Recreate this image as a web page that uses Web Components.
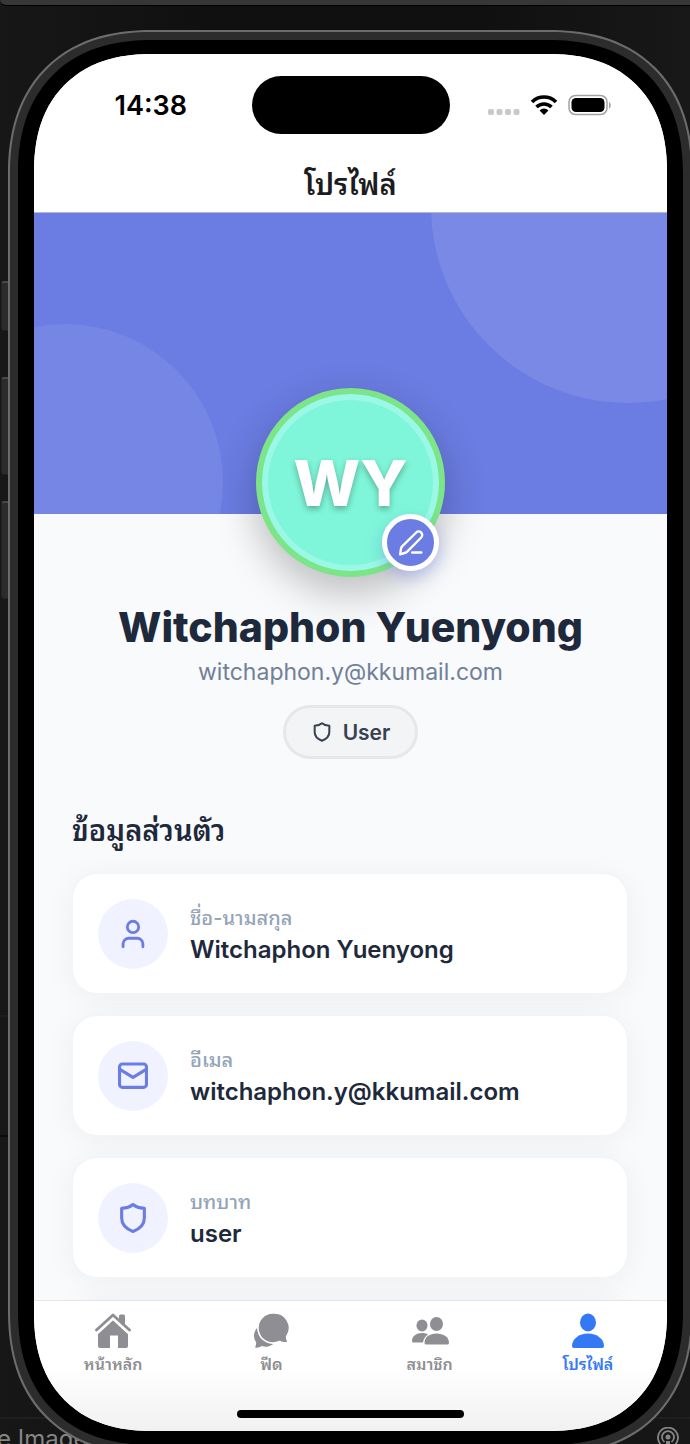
<!DOCTYPE html>
<html lang="th">
<head>
<meta charset="utf-8">
<meta name="viewport" content="width=device-width, initial-scale=1">
<title>โปรไฟล์</title>
<style>
  html, body { margin: 0; height: 100%; }
  body { overflow: hidden; background: #121212; font-family: Inter, Thonburi, "Noto Sans Thai Looped", Loma, "Noto Sans", sans-serif; color: #1e293b; }
</style>
</head>
<body>
<sim-desktop>
  <phone-frame>
    <status-bar slot="top">14:38</status-bar>
    <nav-header slot="top">โปรไฟล์</nav-header>
    <profile-hero></profile-hero>
    <profile-summary initials="WY" email="witchaphon.y@kkumail.com" role-name="User">Witchaphon Yuenyong</profile-summary>
    <info-section heading="ข้อมูลส่วนตัว">
      <info-card icon="person" label="ชื่อ-นามสกุล">Witchaphon Yuenyong</info-card>
      <info-card icon="mail" label="อีเมล">witchaphon.y@kkumail.com</info-card>
      <info-card icon="shield" label="บทบาท">user</info-card>
      <info-card></info-card>
    </info-section>
    <tab-bar slot="bottom">
      <tab-item icon="house">หน้าหลัก</tab-item>
      <tab-item icon="chat">ฟีด</tab-item>
      <tab-item icon="people">สมาชิก</tab-item>
      <tab-item icon="profile" active>โปรไฟล์</tab-item>
    </tab-bar>
  </phone-frame>
</sim-desktop>

<script>
const ICONS = {
  person: `<svg viewBox="0 0 24 24" width="34" height="34" fill="none" stroke="currentColor" stroke-width="2" stroke-linejoin="round"><circle cx="12" cy="7" r="4"/><path d="M5 21v-2a4 4 0 0 1 4-4h6a4 4 0 0 1 4 4v2" stroke-linecap="round"/></svg>`,
  mail: `<svg viewBox="0 0 24 24" width="34" height="34" fill="none" stroke="currentColor" stroke-width="2.200" stroke-linejoin="round" stroke-linecap="round"><rect x="2.500" y="3.500" width="19" height="16.500" rx="2"/><path d="M3 7.500l9 5.500 9-5.500"/></svg>`,
  shield: `<svg viewBox="0 0 24 24" width="34" height="34" fill="none" stroke="currentColor" stroke-width="2.200" stroke-linejoin="round" stroke-linecap="round"><path d="M12 2.500C10 4.200 7.500 5 4 5.200V12c0 4.500 3.500 7.800 8 9.500 4.500-1.700 8-5 8-9.500V5.200C16.500 5 14 4.200 12 2.500z"/></svg>`,
  house: `<svg viewBox="0 0 36 36" width="36" height="36"><path fill="currentColor" d="M3 18.500L18 5.300l15 13.200V33q0 2-2 2h-8V22.500h-8V35H5q-2 0-2-2z"/><path fill="none" stroke="#fff" stroke-width="6" stroke-linecap="round" stroke-linejoin="round" d="M1.500 18.500L18 3.300l16.500 15.200"/><path fill="none" stroke="currentColor" stroke-width="2.800" stroke-linecap="round" stroke-linejoin="round" d="M1.500 17L18 2l16.500 15"/><path fill="currentColor" d="M24 3q0-1.500 1.500-1.500h3Q30 1.500 30 3v10l-6-5z"/></svg>`,
  chat: `<svg viewBox="0 0 36 36" width="36" height="36"><path fill="currentColor" d="M4 15C.5 19 0 25 3 29c.5 2-.5 4-1 5.500 3 .5 5.500-.500 7-1.500 4.500 1.500 8.500.5 12-2.500L8 22z"/><path fill="currentColor" stroke="#fff" stroke-width="1.600" stroke-linejoin="round" d="M20.500 0a15 15 0 1 0 6 28.500c2.500 1.500 5 1.800 8.500 1-.8-2-1.500-3.500-1.300-6A15 15 0 0 0 20.500 0z"/></svg>`,
  people: `<svg viewBox="0 0 38 36" width="38" height="36" fill="currentColor"><ellipse cx="11" cy="12.500" rx="5.500" ry="6"/><path d="M1 28C1 23 5.500 20 11 20c2.500 0 4.500.5 6 1.500-3 2-4.500 4.500-5 8H2.500Q1 29.500 1 28z"/><ellipse cx="25.500" cy="11" rx="6.500" ry="7"/><path d="M13.500 30C13.500 24 18.500 20.500 25.500 20.500S38 24 38 30q0 1.500-2 1.500H15.500q-2 0-2-1.500z"/></svg>`,
  profile: `<svg viewBox="0 0 36 36" width="36" height="36" fill="currentColor"><ellipse cx="18" cy="9.500" rx="8" ry="9"/><path d="M2 33C2 26 9 20.500 18 20.500S34 26 34 33q0 2-2 2H4q-2 0-2-2z"/></svg>`,
  pencil: `<svg viewBox="0 0 24 24" width="26" height="26" fill="none" stroke="currentColor" stroke-width="2.200" stroke-linecap="round" stroke-linejoin="round"><path d="M2 22.500l.8-5.500q.2-1 1-1.800L16.800 2.300a3.200 3.200 0 0 1 4.600 4.600L8.500 20q-.8.800-1.800 1z"/><path d="M13 20.800h8.500"/></svg>`
};

function define(name, render) {
  customElements.define(name, class extends HTMLElement {
    constructor() { super(); this.attachShadow({ mode: 'open' }); }
    connectedCallback() {
      const t = document.createElement('template');
      t.innerHTML = render(this);
      this.shadowRoot.replaceChildren(t.content.cloneNode(true));
    }
  });
}

define('sim-desktop', () => `
<style>
  :host { display: grid; height: 100%; grid-template-rows: minmax(0, 1fr); grid-template-columns: minmax(0, 1fr); overflow: hidden; }
  .back { grid-area: 1 / 1; display: flex; flex-direction: column; min-height: 0; background: linear-gradient(90deg, #171717, #101010 30%, #101010 70%, #181818); }
  .strip { height: 5px; background: #373737; border-bottom: 1px solid #000; border-radius: 0 0 0 8px; }
  .space { flex: 1; }
  .panel { height: 118px; border-top: 2px solid #1d1d1d; border-bottom: 2px solid #0b0b0b; }
  .gap { height: 280px; }
  .foot { display: flex; justify-content: space-between; height: 27px; border-top: 2px solid #1f1f1f; box-sizing: border-box; color: #858585; font-size: 24px; line-height: 40px; white-space: nowrap; }
  .foot span { margin-left: -3px; }
  .foot svg { flex: none; margin: 8px 11px 0 0; }
</style>
<div class="back">
  <div class="strip"></div><div class="space"></div><div class="panel"></div><div class="gap"></div>
  <div class="foot"><span>e Image</span>
    <svg width="22" height="22" viewBox="0 0 22 22" fill="none" stroke="#858585" stroke-width="1.800"><path d="M6.500 19.500a10 10 0 1 1 9 0M7.500 15a6 6 0 1 1 7 0"/><circle cx="11" cy="10" r="2.500" fill="#858585" stroke="none"/><path d="M9 14h4v8H9z" fill="#858585" stroke="none"/></svg>
  </div>
</div>
<slot></slot>`);

define('phone-frame', () => `
<style>
  :host { grid-area: 1 / 1; display: grid; grid-template-columns: 7px minmax(0, 1fr); margin: 30px -3px -11px 1px; min-height: 0; }
  .keys { display: flex; flex-direction: column; padding-top: 251px; }
  .keys i { height: 98px; margin-bottom: 26px; box-sizing: border-box; background: #2b2b2b; border: 1px solid #222; border-top: 2px solid #484848; border-right: 0; border-radius: 3px 0 0 3px; }
  .keys i:first-child { height: 50px; margin-bottom: 46px; }
  .body { display: grid; min-height: 0; border-radius: 126px; border: 2px solid #6c6c6c; background: #2c2c2c; padding: 8px; }
  .bezel { display: grid; min-height: 0; background: #000; border-radius: 116px; padding: 14px 16px; }
  .screen { display: flex; flex-direction: column; min-height: 0; overflow: hidden; border-radius: 102px; background: #f8fafc; }
  .scroll { flex: 1; min-height: 0; overflow: hidden; }
  @supports (corner-shape: superellipse(1.2)) {
    .body, .bezel, .screen { corner-shape: superellipse(1.2); }
    .body { border-radius: 144px; }
    .bezel { border-radius: 134px; }
    .screen { border-radius: 118px; }
  }
</style>
<div class="keys"><i></i><i></i><i></i></div>
<div class="body"><div class="bezel"><div class="screen">
  <slot name="top"></slot><div class="scroll"><slot></slot></div><slot name="bottom"></slot>
</div></div></div>`);

define('status-bar', () => `
<style>
  :host { display: grid; grid-template-columns: 1fr 198px 1fr; align-items: center; flex: none; height: 102px; background: #fff; color: #000; }
  time { justify-self: center; padding-left: 16px; font-size: 27px; font-weight: 600; }
  .island { height: 58px; border-radius: 29px; background: #000; }
  .signs { display: flex; align-items: center; justify-content: flex-end; gap: 10px; padding-right: 55px; }
</style>
<time><slot></slot></time><div class="island"></div>
<div class="signs">
  <svg width="32" height="24" viewBox="0 0 32 24" fill="#c9c9c9"><rect x="0" y="16" width="6" height="6" rx="2"/><rect x="8.500" y="16" width="6" height="6" rx="2"/><rect x="17" y="16" width="6" height="6" rx="2"/><rect x="25.500" y="16" width="6" height="6" rx="2"/></svg>
  <svg width="28" height="24" viewBox="0 0 28 24" fill="none" stroke="#000" stroke-width="3.500"><path d="M2 9a17 17 0 0 1 24 0M6.500 14a10.600 10.600 0 0 1 15 0"/><path d="M14 22l-4.400-4.600a6.300 6.300 0 0 1 8.800 0z" fill="#000" stroke="none"/></svg>
  <svg width="44" height="24" viewBox="0 0 44 24"><rect x="1" y="2.500" width="38" height="19" rx="6.500" fill="none" stroke="#a2a2a2" stroke-width="1.500"/><rect x="3.500" y="5" width="33" height="14" rx="4.500"/><path d="M41 9c2 .5 2.500 5.500 0 6.500z" fill="#a2a2a2"/></svg>
</div>`);

define('nav-header', () => `
<style>
  :host { display: block; flex: none; background: #fff; border-bottom: 1px solid #b4b8cc; }
  h1 { margin: 0; padding-top: 1px; font-size: 29px; line-height: 55px; font-weight: 600; text-align: center; color: #1c1c1e; }
</style><h1><slot></slot></h1>`);

define('profile-hero', () => `
<style>
  :host { display: block; position: relative; height: 301px; overflow: hidden; background: #6b7ce2; }
  i { position: absolute; border-radius: 50%; background: rgba(255, 255, 255, .1); }
  .a { width: 394px; height: 394px; right: -158px; top: -204px; }
  .b { width: 316px; height: 316px; left: -127px; bottom: -126px; background: rgba(255, 255, 255, .08); }
</style><i class="a"></i><i class="b"></i>`);

define('profile-summary', el => `
<style>
  :host { display: flex; flex-direction: column; align-items: center; position: relative; margin-top: -126px; text-align: center; }
  .avatar { position: relative; display: grid; place-items: center; box-sizing: border-box; width: 189px; height: 189px; border-radius: 50%; border: 6px solid #7be588; background: #7ff6d9; box-shadow: inset 0 0 0 6px #9cf8e6, 0 16px 40px rgba(0, 0, 0, .25); color: #fff; font-size: 63px; font-weight: 800; text-shadow: 0 3px 6px rgba(0, 0, 0, .3); }
  button { position: absolute; right: 0; bottom: 0; display: grid; place-items: center; box-sizing: border-box; width: 57px; height: 57px; padding: 0; border: 5px solid #fff; border-radius: 50%; background: #6b7ce2; color: #fff; box-shadow: 0 6px 16px rgba(107, 124, 226, .4); }
  h2 { margin: 26px 0 6px; font-size: 41px; line-height: 48px; font-weight: 800; color: #1e293b; white-space: nowrap; }
  a { font-size: 23px; line-height: 30px; color: #718096; text-decoration: none; }
  .pill { display: flex; align-items: center; gap: 10px; box-sizing: border-box; height: 54px; margin-top: 18px; padding: 0 25px; border: 3px solid #e5e7eb; border-radius: 27px; background: #f3f4f6; color: #374151; font-size: 21px; font-weight: 600; }
  .pill svg { width: 22px; height: 22px; }
</style>
<div class="avatar">${el.getAttribute('initials')}
  <button type="button" aria-label="แก้ไขรูปโปรไฟล์">${ICONS.pencil}</button></div>
<h2><slot></slot></h2>
<a href="mailto:${el.getAttribute('email')}">${el.getAttribute('email')}</a>
<div class="pill">${ICONS.shield}<span>${el.getAttribute('role-name')}</span></div>`);

define('info-section', el => `
<style>
  :host { display: block; padding: 54px 39px 0 38px; }
  h3 { margin: 0 0 24px; font-size: 29px; line-height: 36px; font-weight: 600; color: #1e293b; }
  .list { display: flex; flex-direction: column; gap: 21px; }
</style>
<h3>${el.getAttribute('heading')}</h3><div class="list"><slot></slot></div>`);

define('info-card', el => `
<style>
  :host { display: flex; align-items: center; gap: 22px; box-sizing: border-box; height: 121px; padding: 0 25px; border: 1px solid #f1f5f9; border-radius: 25px; background: #fff; box-shadow: 0 3px 30px rgba(0, 0, 0, .05); }
  .icon { display: grid; place-items: center; flex: none; width: 70px; height: 70px; border-radius: 50%; background: #f0f3ff; color: #6b7ce2; }
  .label { font-size: 20px; line-height: 32px; font-weight: 500; color: #94a3b8; }
  .value { font-size: 24px; line-height: 32px; font-weight: 600; color: #1e293b; white-space: nowrap; }
</style>
${el.hasAttribute('icon') ? `<div class="icon">${ICONS[el.getAttribute('icon')]}</div>
<div><div class="label">${el.getAttribute('label')}</div><div class="value"><slot></slot></div></div>` : ''}`);

define('tab-bar', () => `
<style>
  :host { display: flex; flex-direction: column; flex: none; position: relative; height: 130px; border-top: 1px solid #e4e6e9; background: linear-gradient(#fff 50%, #f1f1f1); }
  nav { display: grid; grid-template-columns: repeat(4, minmax(0, 1fr)); padding-top: 12px; }
  i { width: 227px; height: 8px; margin: auto auto 13px; border-radius: 4px; background: #000; }
</style><nav><slot></slot></nav><i></i>`);

define('tab-item', el => `
<style>
  :host { display: block; }
  a { display: flex; flex-direction: column; align-items: center; gap: 3px; color: #8e8e93; text-decoration: none; font-size: 16px; line-height: 24px; font-weight: 600; }
  :host([active]) a { color: #3478f6; }
  svg { display: block; }
</style><a href="#">${ICONS[el.getAttribute('icon')]}<span><slot></slot></span></a>`);
</script>
</body>
</html>
